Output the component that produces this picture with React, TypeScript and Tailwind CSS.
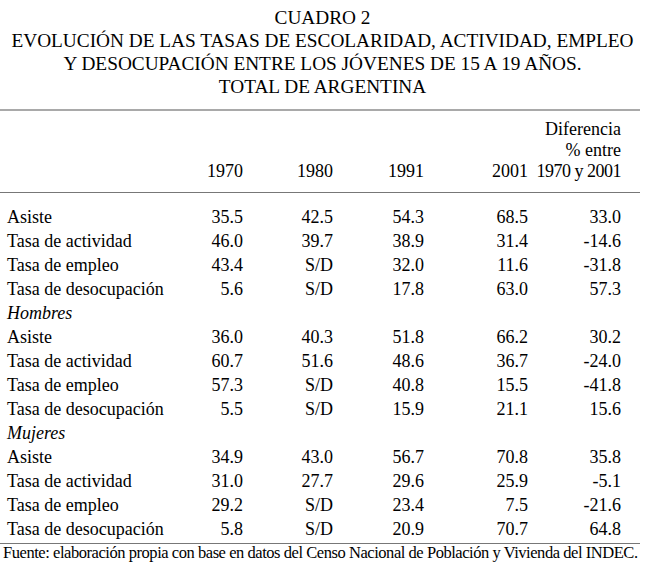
const rows: { label: string; italic?: boolean; v?: string[] }[] = [
  { label: 'Asiste', v: ['35.5', '42.5', '54.3', '68.5', '33.0'] },
  { label: 'Tasa de actividad', v: ['46.0', '39.7', '38.9', '31.4', '-14.6'] },
  { label: 'Tasa de empleo', v: ['43.4', 'S/D', '32.0', '11.6', '-31.8'] },
  { label: 'Tasa de desocupación', v: ['5.6', 'S/D', '17.8', '63.0', '57.3'] },
  { label: 'Hombres', italic: true },
  { label: 'Asiste', v: ['36.0', '40.3', '51.8', '66.2', '30.2'] },
  { label: 'Tasa de actividad', v: ['60.7', '51.6', '48.6', '36.7', '-24.0'] },
  { label: 'Tasa de empleo', v: ['57.3', 'S/D', '40.8', '15.5', '-41.8'] },
  { label: 'Tasa de desocupación', v: ['5.5', 'S/D', '15.9', '21.1', '15.6'] },
  { label: 'Mujeres', italic: true },
  { label: 'Asiste', v: ['34.9', '43.0', '56.7', '70.8', '35.8'] },
  { label: 'Tasa de actividad', v: ['31.0', '27.7', '29.6', '25.9', '-5.1'] },
  { label: 'Tasa de empleo', v: ['29.2', 'S/D', '23.4', '7.5', '-21.6'] },
  { label: 'Tasa de desocupación', v: ['5.8', 'S/D', '20.9', '70.7', '64.8'] },
];

const grid = 'grid grid-cols-[190px_46px_90px_91px_104px_93px] pl-[7px]';

export default function App() {
  return (
    <div className="w-[645px] h-[566px] bg-white text-black font-['Liberation_Serif','Times_New_Roman',serif]">
      {/* Title */}
      <div className="pt-[6px] text-center text-[19.3px] leading-[23px]">
        <div>CUADRO 2</div>
        <div>EVOLUCIÓN DE LAS TASAS DE ESCOLARIDAD, ACTIVIDAD, EMPLEO</div>
        <div>Y DESOCUPACIÓN ENTRE LOS JÓVENES DE 15 A 19 AÑOS.</div>
        <div>TOTAL DE ARGENTINA</div>
      </div>

      <div className="mt-[11px] mr-[5px] h-[2px] bg-[#a9a9a9]" />

      {/* Header */}
      <div className={`${grid} pt-[8px] pb-[10px] text-[18px] leading-[21px] text-right items-end border-b border-[#777] mr-[5px]`}>
        <div />
        <div>1970</div>
        <div>1980</div>
        <div>1991</div>
        <div>2001</div>
        <div>
          <div>Diferencia</div>
          <div>% entre</div>
          <div className="tracking-[-0.5px]">1970 y 2001</div>
        </div>
      </div>

      {/* Body */}
      <div className="pt-[12px] pb-[2px] border-b border-[#777] mr-[5px]">
        {rows.map((r, i) => (
          <div key={i} className={`${grid} text-[18px] leading-[24px]`}>
            <div className={r.italic ? 'italic' : ''}>{r.label}</div>
            {(r.v ?? ['', '', '', '', '']).map((x, j) => (
              <div key={j} className="text-right">{x}</div>
            ))}
          </div>
        ))}
      </div>

      <div className="pl-[3px] text-[16.5px] leading-[18px] tracking-[-0.45px] whitespace-nowrap">
        Fuente: elaboración propia con base en datos del Censo Nacional de Población y Vivienda del INDEC.
      </div>
    </div>
  );
}
